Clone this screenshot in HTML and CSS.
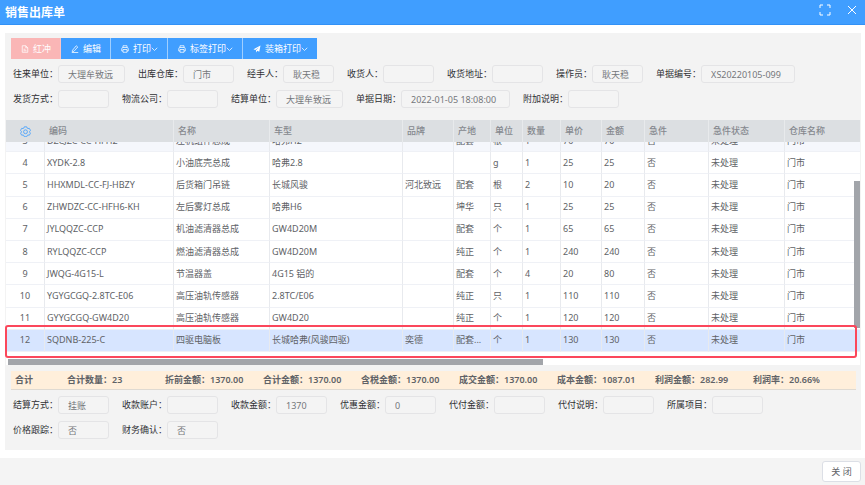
FILE: index.html
```html
<!DOCTYPE html>
<html lang="zh-CN">
<head>
<meta charset="utf-8">
<meta name="viewport" content="width=device-width, initial-scale=1">
<title>销售出库单</title>
<link rel="stylesheet" href="styles.css">
</head>
<body>
<svg class="defs" aria-hidden="true">
  <symbol id="i-printer" viewBox="0 0 16 16"><path d="M4 5V1.5h8V5M4 12H1.5V7.5Q1.500 5 4 5H12Q14.500 5 14.500 7.500V12H12M4 9h8v5.500H4z"/></symbol>
  <symbol id="i-down" viewBox="0 0 14 16"><path d="M1.500 5.500 7 11l5.500-5.500"/></symbol>
</svg>
<header class="titlebar">
  <h1>销售出库单</h1>
  <div class="window-actions">
    <button type="button" aria-label="全屏"><svg width="12" height="12" viewBox="0 0 12 12"><path d="M1 4V1h3M8 1h3v3M11 8v3H8M4 11H1V8"/></svg></button>
    <button type="button" aria-label="关闭窗口"><svg width="10" height="10" viewBox="0 0 10 10"><path d="M1 1l8 8M9 1 1 9"/></svg></button>
  </div>
</header>
<main class="panel">
  <div class="toolbar">
    <button type="button" class="tool danger"><svg class="ico" viewBox="0 0 16 16"><path d="M2.500 1.500h7l4 4v9h-11zM9.500 1.500v4h4M5 8.500h4M5 11.500h6"/></svg><span>红冲</span></button>
    <button type="button" class="tool"><svg class="ico" viewBox="0 0 16 16"><path d="M3 10.500 10.500 1.500l3 2.500L6 12.500l-3.500.8zM1.500 15h13"/></svg><span>编辑</span></button>
    <button type="button" class="tool"><svg class="ico" viewBox="0 0 16 16"><use href="#i-printer"/></svg><span>打印</span><svg class="caret"><use href="#i-down"/></svg></button>
    <button type="button" class="tool"><svg class="ico" viewBox="0 0 16 16"><use href="#i-printer"/></svg><span>标签打印</span><svg class="caret"><use href="#i-down"/></svg></button>
    <button type="button" class="tool"><svg class="ico solid" viewBox="0 0 16 16"><path d="M1 8.500 15 1l-2.500 12.500-4-2L6 15v-4.500L12 4.500 4.500 10z"/></svg><span>装箱打印</span><svg class="caret"><use href="#i-down"/></svg></button>
  </div>

  <form class="fields">
    <div class="line">
      <label>往来单位：<input class="m" value="大理牟致远" readonly></label>
      <label>出库仓库：<input value="门市" readonly></label>
      <label>经手人：<input value="耿天稳" readonly></label>
      <label>收货人：<input readonly></label>
      <label>收货地址：<input readonly></label>
      <label>操作员：<input value="耿天稳" readonly></label>
      <label>单据编号：<input class="l" value="XS20220105-099" readonly></label>
    </div>
    <div class="line">
      <label>发货方式：<input readonly></label>
      <label>物流公司：<input readonly></label>
      <label>结算单位：<input class="m" value="大理牟致远" readonly></label>
      <label>单据日期：<input class="xl" value="2022-01-05 18:08:00" readonly></label>
      <label>附加说明：<input readonly></label>
    </div>
  </form>

  <section class="grid">
    <table class="head">
      <colgroup><col class="c39"><col class="c129"><col class="c96"><col class="c133"><col class="c51"><col class="c37"><col class="c32"><col class="c38"><col class="c41"><col class="c43"><col class="c64"><col class="c76"><col></colgroup>
      <thead><tr>
        <th><svg class="gear" viewBox="0 0 20 20"><path d="M7.800 1.500h4.400l.8 2.300 1.500.9 2.400-.5 2.200 3.800-1.600 1.800v1.400l1.600 1.800-2.200 3.800-2.400-.5-1.500.9-.8 2.300H7.800L7 17.200l-1.500-.9-2.400.5L.9 13l1.600-1.800V9.800L.9 8l2.200-3.800 2.400.5L7 3.800z"/><circle cx="10" cy="10.500" r="3.500"/></svg></th>
        <th>编码</th><th>名称</th><th>车型</th><th>品牌</th><th>产地</th><th>单位</th><th>数量</th><th>单价</th><th>金额</th><th>急件</th><th>急件状态</th><th>仓库名称</th>
      </tr></thead>
    </table>
    <div class="scroll">
      <table class="rows">
        <colgroup><col class="c39"><col class="c129"><col class="c96"><col class="c133"><col class="c51"><col class="c37"><col class="c32"><col class="c38"><col class="c41"><col class="c43"><col class="c64"><col class="c76"><col></colgroup>
        <tbody>
          <tr class="hover"><td>3</td><td>DZCJZC-CC-HFH2</td><td>左机组件总成</td><td>哈弗H2</td><td></td><td>配套</td><td>根</td><td>1</td><td>70</td><td>70</td><td>否</td><td>未处理</td><td>门市</td></tr>
          <tr><td>4</td><td>XYDK-2.8</td><td>小油底壳总成</td><td>哈弗2.8</td><td></td><td></td><td>g</td><td>1</td><td>25</td><td>25</td><td>否</td><td>未处理</td><td>门市</td></tr>
          <tr><td>5</td><td>HHXMDL-CC-FJ-HBZY</td><td>后货箱门吊链</td><td>长城风骏</td><td>河北致远</td><td>配套</td><td>根</td><td>2</td><td>10</td><td>20</td><td>否</td><td>未处理</td><td>门市</td></tr>
          <tr><td>6</td><td>ZHWDZC-CC-HFH6-KH</td><td>左后雾灯总成</td><td>哈弗H6</td><td></td><td>坤华</td><td>只</td><td>1</td><td>25</td><td>25</td><td>否</td><td>未处理</td><td>门市</td></tr>
          <tr><td>7</td><td>JYLQQZC-CCP</td><td>机油滤清器总成</td><td>GW4D20M</td><td></td><td>配套</td><td>个</td><td>1</td><td>65</td><td>65</td><td>否</td><td>未处理</td><td>门市</td></tr>
          <tr><td>8</td><td>RYLQQZC-CCP</td><td>燃油滤清器总成</td><td>GW4D20M</td><td></td><td>纯正</td><td>个</td><td>1</td><td>240</td><td>240</td><td>否</td><td>未处理</td><td>门市</td></tr>
          <tr><td>9</td><td>JWQG-4G15-L</td><td>节温器盖</td><td>4G15 铝的</td><td></td><td>配套</td><td>个</td><td>4</td><td>20</td><td>80</td><td>否</td><td>未处理</td><td>门市</td></tr>
          <tr><td>10</td><td>YGYGCGQ-2.8TC-E06</td><td>高压油轨传感器</td><td>2.8TC/E06</td><td></td><td>纯正</td><td>只</td><td>1</td><td>110</td><td>110</td><td>否</td><td>未处理</td><td>门市</td></tr>
          <tr><td>11</td><td>GYYGCGQ-GW4D20</td><td>高压油轨传感器</td><td>GW4D20</td><td></td><td>纯正</td><td>个</td><td>1</td><td>120</td><td>120</td><td>否</td><td>未处理</td><td>门市</td></tr>
          <tr class="current"><td>12</td><td>SQDNB-225-C</td><td>四驱电脑板</td><td>长城哈弗(风骏四驱)</td><td>奕德</td><td>配套...</td><td>个</td><td>1</td><td>130</td><td>130</td><td>否</td><td>未处理</td><td>门市</td></tr>
        </tbody>
      </table>
      <div class="vbar"></div>
    </div>
    <div class="hbar"></div>
    <div class="marker"></div>
  </section>

  <div class="summary">
    <span>合计</span><span>合计数量：23</span><span>折前金额：1370.00</span><span>合计金额：1370.00</span><span>含税金额：1370.00</span><span>成交金额：1370.00</span><span>成本金额：1087.01</span><span>利润金额：282.99</span><span>利润率：20.66%</span>
  </div>

  <form class="fields">
    <div class="line">
      <label>结算方式：<input value="挂账" readonly></label>
      <label>收款账户：<input readonly></label>
      <label>收款金额：<input value="1370" readonly></label>
      <label>优惠金额：<input value="0" readonly></label>
      <label>代付金额：<input readonly></label>
      <label>代付说明：<input readonly></label>
      <label>所属项目：<input readonly></label>
    </div>
    <div class="line">
      <label>价格跟踪：<input value="否" readonly></label>
      <label>财务确认：<input value="否" readonly></label>
    </div>
  </form>
</main>
<footer class="footer"><button type="button">关 闭</button></footer>
</body>
</html>
```
FILE: styles.css
```css
* { box-sizing: border-box; }

body {
  margin: 0;
  background: #fff;
  color: #606266;
  font: 9px/12px "Noto Sans", "Noto Sans CJK SC", sans-serif;
}

button, input { font: inherit; }
button { cursor: pointer; }
svg { fill: none; stroke: currentColor; }
.defs { position: absolute; width: 0; height: 0; }

.titlebar {
  display: flex;
  justify-content: space-between;
  height: 25px;
  padding: 0 8px 0 5px;
  background: #409eff;
  border-bottom: 1px solid #3291f6;
  color: #fff;
}
.titlebar h1 { margin: 0; font-size: 12px; line-height: 25px; font-weight: 700; }
.window-actions { display: flex; gap: 16px; height: 20px; align-items: center; }
.window-actions button { display: flex; padding: 0; border: 0; background: none; color: #fff; }

.panel { margin: 8px 4px 8px 5px; padding: 5px 0 11px; background: #f3f3f3; }

.toolbar { display: flex; padding: 0 6px; }
.tool {
  display: flex;
  align-items: center;
  height: 21px;
  padding: 0 9px 0 10px;
  border: 0;
  border-right: 1px solid #a0cfff;
  background: #409eff;
  color: #fff;
}
.tool:last-child { border-right: 0; }
.tool.danger { background: #fab6b6; border-color: #fbc4c4; }
.ico { width: 8px; height: 8px; margin-right: 4px; stroke-width: 1.5; }
.ico.solid { fill: currentColor; stroke: none; }
.caret { width: 7px; height: 8px; stroke-width: 1.5; }

.fields { display: grid; gap: 7px; padding: 6px 8px 0; }
.line { display: flex; gap: 13px; }
.fields label { display: flex; align-items: center; color: #303133; white-space: nowrap; }
.fields input {
  width: 51px;
  height: 18px;
  padding: 0 9px;
  border: 1px solid #e4e4e6;
  border-radius: 3px;
  background: #f4f4f4;
  color: #75777b;
  outline: 0;
}
.fields input.m { width: 67px; }
.fields input.l { width: 94px; }
.fields input.xl { width: 109px; }

.grid { position: relative; margin: 12px 1px 0; background: #fff; }
table { width: 100%; table-layout: fixed; border-collapse: separate; border-spacing: 0; }
.c39 { width: 39px; }
.c129 { width: 129px; }
.c96 { width: 96px; }
.c133 { width: 133px; }
.c51 { width: 51px; }
.c37 { width: 37px; }
.c32 { width: 32px; }
.c38 { width: 38px; }
.c41 { width: 41px; }
.c43 { width: 43px; }
.c64 { width: 64px; }
.c76 { width: 76px; }

th {
  height: 22px;
  padding: 0 0 0 4px;
  background: #dcdfe2;
  border-right: 1px solid #e8eaec;
  color: #85888e;
  font-weight: 500;
  text-align: left;
}
th:first-child { padding: 0; border-right: 0; text-align: center; }
.gear { display: block; width: 11px; height: 11px; margin: 0 auto; color: #409eff; stroke-width: 1.5; }

.scroll { position: relative; display: flex; align-items: flex-end; height: 210px; overflow: hidden; }
.rows { flex: 1; height: 222px; }
td {
  padding: 0 0 0 2px;
  border-right: 1px solid #e8eaee;
  border-bottom: 1px solid #eff1f6;
  white-space: nowrap;
  overflow: hidden;
}
td:first-child { padding: 0; text-align: center; }
td:last-child, th:last-child { border-right: 0; }
.hover td { background: #f5f7fc; }
.current td { background: #d7e5ff; }
.vbar { position: absolute; top: 39px; right: 0; width: 6px; height: 147px; background: #a2a5aa; }
.hbar { width: 535px; height: 6px; margin: 7px 0 0 2px; background: #a2a5aa; }
.marker {
  position: absolute;
  left: -1px;
  right: 3px;
  bottom: 7px;
  height: 33px;
  border: 2px solid #fb475b;
  border-radius: 3px;
}

.summary {
  display: grid;
  grid-template-columns: 52px repeat(8, 98px);
  height: 19px;
  margin: 6px 5px 0 6px;
  padding-left: 4px;
  border-bottom: 1px solid #dfdad2;
  background: #ffefdb;
  font-weight: 600;
  line-height: 18px;
  white-space: nowrap;
}

.footer { display: flex; justify-content: flex-end; min-height: 27px; padding: 3px 4px; background: #f4f4f4; }
.footer button {
  width: 39px;
  height: 21px;
  padding: 0;
  border: 1px solid #dcdfe6;
  border-radius: 3px;
  background: #fff;
  color: #606266;
}
```
